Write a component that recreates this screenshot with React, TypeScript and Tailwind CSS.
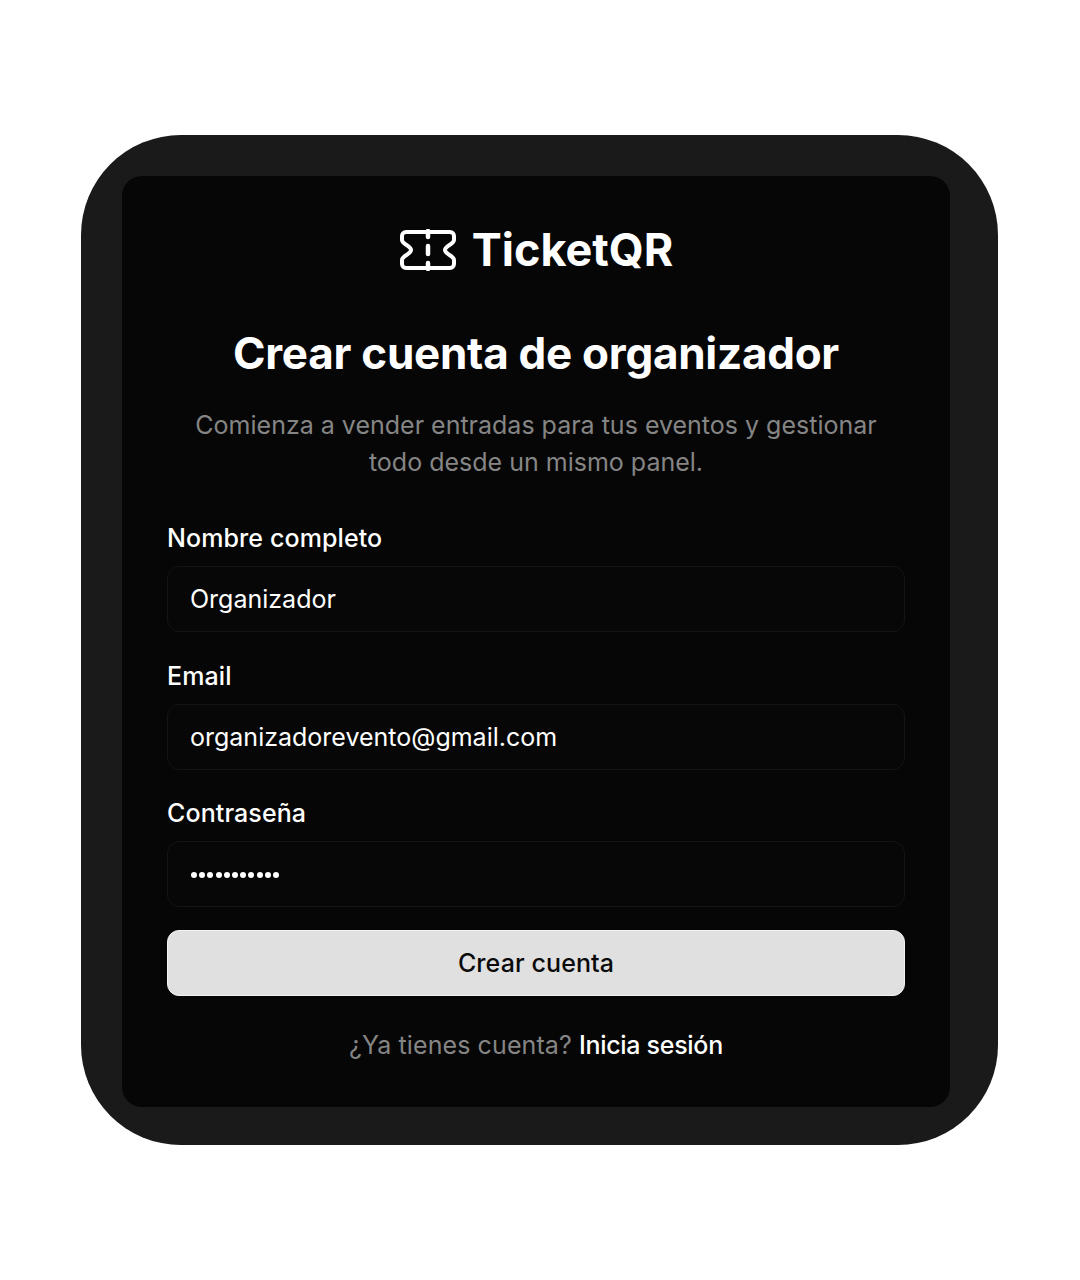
import React from 'react';

const Field: React.FC<{ label: string; value: string; dots?: boolean }> = ({ label, value, dots }) => (
  <div>
    <label className="block text-[25px] leading-[30px] font-[550] text-white tracking-[0.1px]">{label}</label>
    <div className="mt-[13px] h-[66px] rounded-[12px] border border-[#141414] bg-[#070707] pl-[22px] pr-[23px] pt-[2px] flex items-center">
      {dots ? (
        <div className="flex gap-[2.2px] ml-[1px]">
          {Array.from({ length: 11 }).map((_, i) => (
            <span key={i} className="w-[6px] h-[6px] rounded-full bg-white" />
          ))}
        </div>
      ) : (
        <span className="text-[25px] text-white">{value}</span>
      )}
    </div>
  </div>
);

const TicketLogo: React.FC = () => (
  <svg width="58" height="42" viewBox="0 0 58 42" fill="none" stroke="white" strokeWidth="4" strokeLinejoin="round" strokeLinecap="round">
    <path d="M7 3h44a4 4 0 0 1 4 4v4C55 15 46 17 46 21C46 25 55 27 55 31v4a4 4 0 0 1-4 4H7a4 4 0 0 1-4-4v-4C3 27 12 25 12 21C12 17 3 15 3 11V7a4 4 0 0 1 4-4Z" />
    <path d="M29 2v6M29 17v8M29 34v6" strokeWidth="4.5" />
  </svg>
);

export default function App() {
  return (
    <div className="min-h-[1280px] bg-white flex items-center justify-center font-['Inter',sans-serif]">
      <div className="w-[917px] h-[1010px] rounded-[100px] bg-[#1a1a1a] pt-[41px] pl-[41px] pr-[48px] pb-[38px] ml-[-1px]">
        <div className="h-full rounded-[20px] bg-[#060606] px-[45px] pt-[50px] text-center">
          <div className="flex items-center justify-center gap-[15px] h-[48px]">
            <TicketLogo />
            <span className="text-[45px] font-bold text-white">TicketQR</span>
          </div>
          <h1 className="mt-[54px] text-[44px] leading-[50px] font-bold text-white tracking-[-0.27px]">Crear cuenta de organizador</h1>
          <p className="mt-[29px] text-[25px] leading-[37px] text-[#858585]">
            Comienza a vender entradas para tus eventos y gestionar<br />todo desde un mismo panel.
          </p>
          <div className="mt-[42px] text-left flex flex-col gap-[28.5px]">
            <Field label="Nombre completo" value="Organizador" />
            <Field label="Email" value="organizadorevento@gmail.com" />
            <Field label="Contraseña" value="" dots />
          </div>
          <button className="mt-[23px] pt-[2px] w-full h-[66px] rounded-[12px] bg-[#e0e0e0] border border-[#f2f2f2] text-[25px] font-medium text-[#0a0a0a] tracking-[0.1px]">Crear cuenta</button>
          <p className="mt-[31px] text-[25px] leading-[37px] text-[#858585] tracking-[0.1px]">
            ¿Ya tienes cuenta? <span className="text-white font-medium tracking-[-0.3px]">Inicia sesión</span>
          </p>
        </div>
      </div>
    </div>
  );
}
